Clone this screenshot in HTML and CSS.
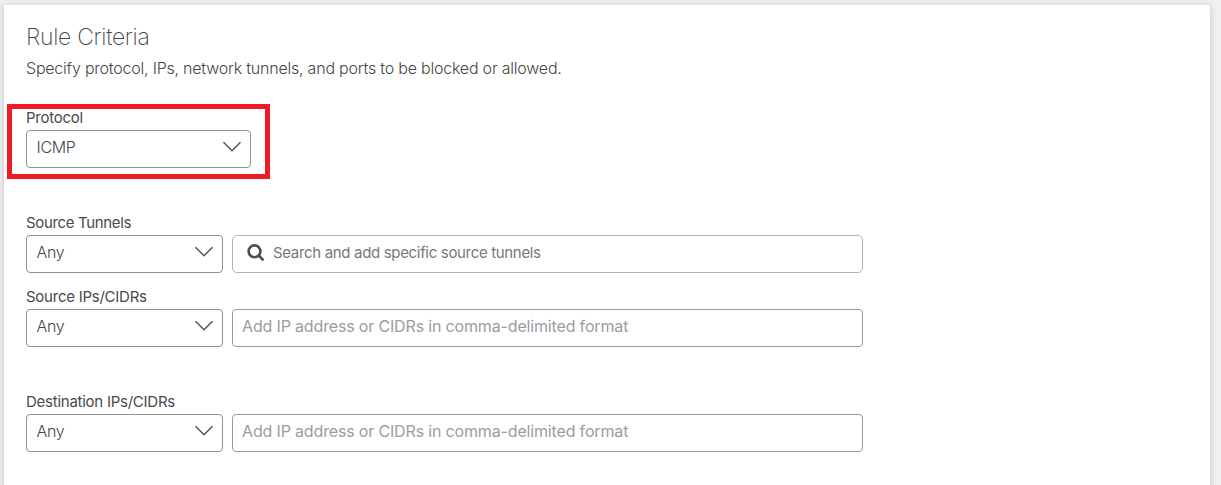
FILE: index.html
```html
<!DOCTYPE html>
<html lang="en">
<head>
<meta charset="utf-8">
<title>Rule Criteria</title>
<link rel="stylesheet" href="styles.css">
</head>
<body>
<main class="card">
  <h1 class="title"><span>Rule Criteria</span></h1>
  <p class="subtitle"><span>Specify protocol, IPs, network tunnels, and ports to be blocked or allowed.</span></p>

  <section class="highlight">
    <div class="label protocol-label"><span>Protocol</span></div>
    <div class="select wide"><span class="icmp">ICMP</span><svg class="chevron" viewBox="0 0 20 12"><path d="M1.5 1.2 10 9.7 18.500 1.2"/></svg></div>
  </section>

  <section class="group tunnels">
    <div class="label tunnels-label"><span>Source Tunnels</span></div>
    <div class="row">
      <div class="select"><span class="any">Any</span><svg class="chevron" viewBox="0 0 20 12"><path d="M1.5 1.2 10 9.7 18.500 1.2"/></svg></div>
      <div class="input search"><svg class="glass" viewBox="0 0 18 18"><circle cx="7.500" cy="7.300" r="5.900"/><path d="m11.700 11.500 4.800 4.900"/></svg><span class="hint">Search and add specific source tunnels</span></div>
    </div>
  </section>

  <section class="group source">
    <div class="label source-label"><span>Source IPs/CIDRs</span></div>
    <div class="row">
      <div class="select"><span class="any">Any</span><svg class="chevron" viewBox="0 0 20 12"><path d="M1.5 1.2 10 9.7 18.500 1.2"/></svg></div>
      <div class="input"><span class="placeholder">Add IP address or CIDRs in comma-delimited format</span></div>
    </div>
  </section>

  <section class="group destination">
    <div class="label destination-label"><span>Destination IPs/CIDRs</span></div>
    <div class="row">
      <div class="select"><span class="any">Any</span><svg class="chevron" viewBox="0 0 20 12"><path d="M1.5 1.2 10 9.7 18.500 1.2"/></svg></div>
      <div class="input"><span class="placeholder">Add IP address or CIDRs in comma-delimited format</span></div>
    </div>
  </section>
</main>
</body>
</html>
```

FILE: styles.css
```css
* { box-sizing: border-box; }
body {
  margin: 0;
  height: 485px;
  overflow: hidden;
  background: #f0f0f0;
  font-family: Inter, "Open Sans", sans-serif;
  color: #444547;
  padding: 5px 11px 0 4px;
}
.card {
  height: 500px;
  padding: 17px 22px 0;
  background: #fff;
  box-shadow: 0 1px 7px rgba(0, 0, 0, .2);
}
.title, .subtitle { margin: 0; white-space: nowrap; }
.title { font-size: 23px; font-weight: 200; line-height: 30px; letter-spacing: -.3px; }
.subtitle { margin-top: 6px; font-size: 16px; font-weight: 300; line-height: 20px; letter-spacing: -.215px; }
.highlight {
  width: 263px;
  height: 75px;
  margin: 26px 0 0 -19px;
  padding: 0 14px;
  border: 5px solid #ee1c25;
}
.label { height: 21px; font-size: 15px; line-height: 18px; letter-spacing: -.25px; color: #48494b; white-space: nowrap; }
.tunnels-label { letter-spacing: -.34px; }
.tunnels { margin-top: 35px; }
.source { margin-top: 15px; }
.destination { margin-top: 46px; }
.source, .tunnels, .destination { height: 59px; }
.row { display: flex; gap: 9px; }
.select {
  display: flex;
  align-items: center;
  justify-content: space-between;
  width: 197px;
  height: 38px;
  padding: 0 8px 4px 9.5px;
  border: 1px solid #919294;
  border-radius: 4px;
  font-size: 16px;
  font-weight: 300;
  letter-spacing: -.3px;
}
.wide { width: 225px; }
.chevron { width: 20px; height: 12px; fill: none; stroke: #58595b; stroke-width: 1.6; }
.input {
  display: flex;
  align-items: center;
  width: 631px;
  height: 38px;
  padding: 0 9px 4px;
  border: 1px solid #98999b;
  border-radius: 4px;
  white-space: nowrap;
}
.placeholder { font-size: 16px; color: #9b9c9f; letter-spacing: -.16px; }
.search { padding: 0 14px 3px; gap: 8px; border-color: #b1b2b5; border-radius: 5px; }
.glass { width: 18px; height: 18px; fill: none; stroke: #4a4d52; stroke-width: 2.6; }
.hint { font-size: 15px; color: #77787b; letter-spacing: -.33px; }
```
